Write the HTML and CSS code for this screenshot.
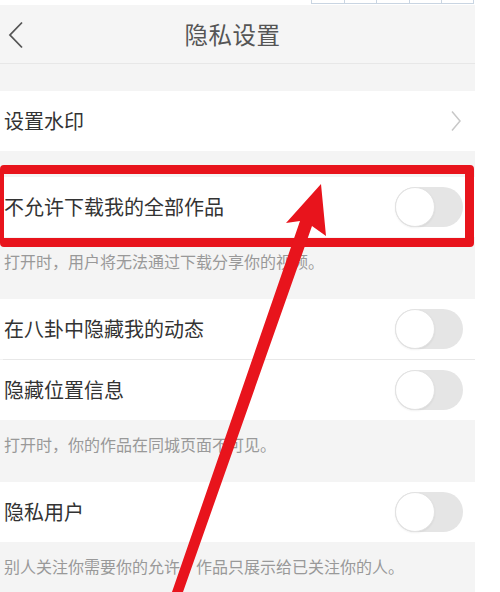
FILE: index.html
```html
<!DOCTYPE html>
<html lang="zh-CN">
<head>
<meta charset="utf-8">
<title>隐私设置</title>
<link rel="stylesheet" href="styles.css">
</head>
<body>
<div class="screen">
  <div class="topstrip">
    <div class="cells"><span></span><span></span><span></span><span></span><span></span></div>
  </div>
  <header class="navbar">
    <svg class="back" width="18" height="28" viewBox="0 0 18 28"><path d="M15 1.5 L3 14 L15 26.5" fill="none" stroke="#555" stroke-width="1.8"/></svg>
    <h1 class="title">隐私设置</h1>
    <span></span>
  </header>
  <div class="spacer-top"></div>
  <div class="row">
    <span class="label">设置水印</span>
    <svg class="chev" width="12" height="22" viewBox="0 0 12 22"><path d="M2 1.5 L10 11 L2 20.5" fill="none" stroke="#c8c8c8" stroke-width="1.5"/></svg>
  </div>
  <div class="gap"></div>
  <div class="row">
    <span class="label">不允许下载我的全部作品</span>
    <span class="toggle"><span class="knob"></span></span>
  </div>
  <p class="hint">打开时，用户将无法通过下载分享你的视频。</p>
  <div class="row">
    <span class="label">在八卦中隐藏我的动态</span>
    <span class="toggle"><span class="knob"></span></span>
  </div>
  <div class="divider"></div>
  <div class="row">
    <span class="label">隐藏位置信息</span>
    <span class="toggle"><span class="knob"></span></span>
  </div>
  <p class="hint">打开时，你的作品在同城页面不可见。</p>
  <div class="row">
    <span class="label">隐私用户</span>
    <span class="toggle"><span class="knob"></span></span>
  </div>
  <p class="hint">别人关注你需要你的允许，作品只展示给已关注你的人。</p>

  <div class="redbox"></div>
  <svg class="arrow" width="500" height="592" viewBox="0 0 500 592">
    <polygon points="321,184 326,236 312,226 183,592 172,592 300,221 286,223" fill="#e8141c"/>
  </svg>
</div>
</body>
</html>
```

FILE: styles.css
```css
* { box-sizing: border-box; }
html, body { margin: 0; padding: 0; background: #fff; }
body {
  width: 500px;
  height: 592px;
  overflow: hidden;
  font-family: "Noto Sans CJK SC", "Noto Sans", sans-serif;
}
.screen {
  position: relative;
  width: 475px;
  height: 592px;
  background: #f4f4f4;
}
.topstrip {
  height: 5px;
  background: #fff;
}
.cells {
  display: flex;
  margin-left: 311px;
  height: 4px;
}
.cells span {
  width: 32.5px;
  height: 4px;
  border: 1px solid #c9d5e2;
  border-top: none;
  border-right: none;
}
.cells span:last-child { border-right: 1px solid #c9d5e2; }
.navbar {
  display: grid;
  grid-template-columns: 30px 1fr 40px;
  align-items: center;
  height: 59px;
  background: #f5f5f5;
  border-bottom: 1px solid #e7e7e7;
}
.back { margin-left: 7px; margin-top: 1px; }
.title {
  margin: 0;
  text-align: center;
  font-size: 23.5px;
  font-weight: 400;
  color: #555;
  letter-spacing: 0.5px;
}
.spacer-top { height: 27px; }
.gap { height: 26px; }
.row {
  display: flex;
  align-items: center;
  justify-content: space-between;
  height: 60px;
  padding: 0 12px 2px 4px;
  background: #fff;
}
.label {
  font-size: 20px;
  color: #333;
}
.chev { margin-right: 1px; margin-top: 2px; }
.row .toggle { margin-top: 2px; }
.divider {
  height: 1px;
  margin-left: 3px;
  background: #e8e8e8;
}
.hint {
  margin: 0;
  height: 62px;
  padding: 13px 4px 0;
  font-size: 16px;
  line-height: 22px;
  color: #999;
}
.toggle {
  position: relative;
  width: 68px;
  height: 40px;
  border-radius: 20px;
  background: #e5e5e5;
}
.knob {
  position: absolute;
  left: 0;
  top: 0;
  width: 40px;
  height: 40px;
  border-radius: 50%;
  background: #fff;
  border: 1px solid #e2e2e2;
  box-shadow: 0 1px 2px rgba(0,0,0,0.06);
}
.redbox {
  position: absolute;
  left: 0;
  top: 165px;
  width: 474px;
  height: 82px;
  border: 9px solid #e8141c;
  border-left-width: 4px;
  border-radius: 4px;
}
.arrow {
  position: absolute;
  left: 0;
  top: 0;
  pointer-events: none;
}
```
